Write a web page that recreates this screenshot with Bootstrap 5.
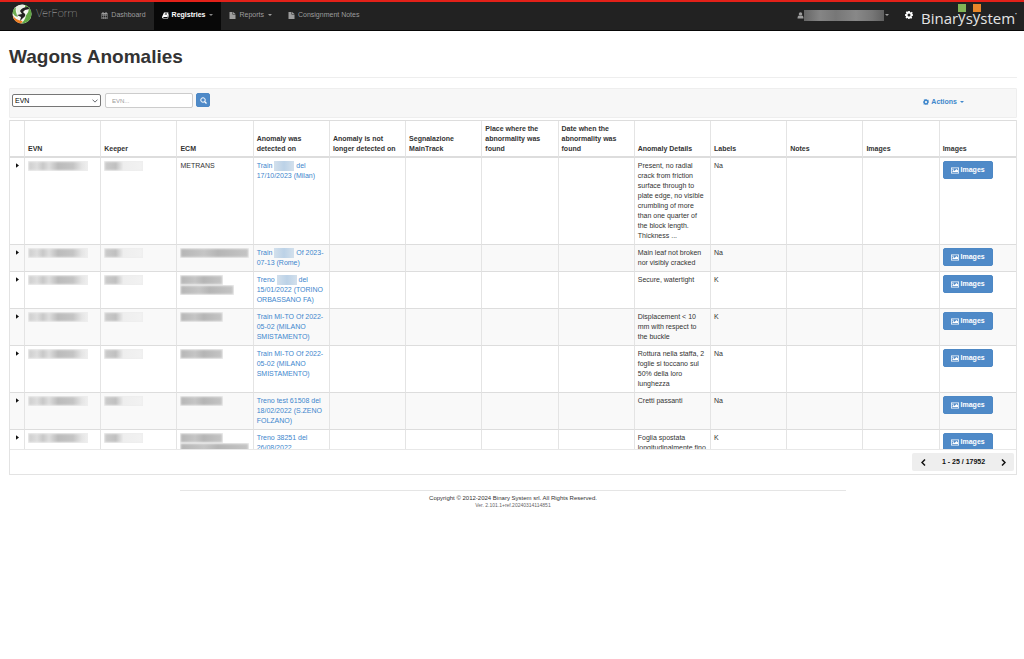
<!DOCTYPE html>
<html lang="en">
<head>
<meta charset="utf-8">
<meta name="viewport" content="width=device-width, initial-scale=1">
<title>Wagons Anomalies</title>
<link href="https://cdn.jsdelivr.net/npm/bootstrap@5.3.0/dist/css/bootstrap.min.css" rel="stylesheet">
<style>
body{font-family:"Liberation Sans",Arial,sans-serif;font-size:7px;line-height:10px;color:#333;background:#fff}
a{color:#337ab7;text-decoration:none}
svg{display:inline-block;fill:currentColor;flex:none}
.topbar{background:#222;border-top:2px solid #e32119;border-bottom:1px solid #080808;height:31px;padding:0 7px 0 12px;color:#9d9d9d}
.topbar .nav-link{color:#9d9d9d;padding:0 8px 2px;height:28px;font-size:7px;display:flex;align-items:center;gap:3px}
.topbar .nav-link.active{background:#080808;color:#fff;font-weight:bold}
.topbar .nav-link.active .caret{color:#888}
.topbar .navbar-brand{font:100 11px/24px Roboto,sans-serif;color:#bbb;gap:4px;margin:0 16px 0 0;padding:0}
.caret{border:2px solid transparent;border-top-color:currentColor;border-bottom:0;margin-left:1px;display:inline-block;vertical-align:middle}
.user-mask{width:80px;height:11px;background:linear-gradient(90deg,#666,#858585 20%,#777 40%,#888 65%,#777 85%,#606060)}
.company{font:400 15px/20px "Open Sans","Noto Sans",sans-serif;color:#e4e4e4;white-space:nowrap;padding-top:6px}
.company .tall{position:relative;top:-2px}
.company .tall::before{content:"";position:absolute;left:0;top:-2px;width:8px;height:8px;background:#82b456}
.company .orange::before{background:#e8862a}
.company sup{font-size:5px;top:-8px}
.page{padding:0 7px 0 9px}
h1{font-size:19px;line-height:24px;font-weight:bold;margin:0;padding:14px 0 8px;border-bottom:1px solid #eee}
.filters{background:#f7f7f7;border:1px solid #eee;height:30px;margin-top:10px;padding:4px 52px 0 2px;border-radius:1px}
.filters .form-select{width:89px;height:13px;font-size:7px;line-height:9px;padding:0 8px 1px 2px;border:1px solid #767676;border-radius:2px;color:#000;margin-top:1px;background-size:6px 6px;background-position:right 2px center}
.filters .form-control{width:88px;height:15px;font-size:6px;line-height:10px;padding:1px 6px;border:1px solid #ccc;border-radius:2px}
.filters .form-control::placeholder{color:#999}
.btn-blue{background:#4f8ac8;border:1px solid #4d88c5;color:#fff;border-radius:2px;display:inline-flex;align-items:center;justify-content:center;font-size:7px;line-height:10px;font-weight:bold;padding:0}
.btn-blue:hover{background:#3071a9;color:#fff}
.btn-find{width:14px;height:14px;margin-left:3px}
.btn-images{width:50px;height:18px;gap:2px}
.actions{color:#4088cc;font-weight:bold;display:flex;align-items:center;gap:2px;padding:0;font-size:7px;line-height:10px;margin-top:4px}
.gridbox{border:1px solid #e3e3e3;border-top:0;margin-top:2px}
.gridscroll{height:330px;overflow:hidden;border-bottom:1px solid #e8e8e8}
.gridtable{table-layout:fixed;margin:0;border-collapse:separate;border-spacing:0;color:#333;border-top:1px solid #ddd}
.gridtable>:not(caption)>*>*{padding:3px;border:0 solid #ddd;border-width:0 1px 1px 0;border-right-color:#e4e4e4;vertical-align:top;background:transparent;box-shadow:none}
.gridtable td:last-child,.gridtable th:last-child{border-right:0!important}
.gridtable thead th{vertical-align:bottom;border-bottom-width:2px!important;padding-bottom:2px!important}
.gridtable tbody tr:nth-child(even){background:#f9f9f9}
.gridtable tbody a{color:#4086cd}
.gridtable .expander{width:15px}
.gridtable .expander-cell{padding-left:5px!important;padding-right:0!important}
.gridtable button{vertical-align:top}
.fold{border:0;background:none;padding:0 0 0 1px;height:9px;line-height:0;display:block;color:#111}
.masked{display:block;height:10px;width:60px;background:linear-gradient(90deg,#ccc 0,#ddd 15%,#c8c8c8 25%,#ddd 35%,#bbb 50%,#c4c4c4 75%,#e5e5e5 90%,#eee);box-shadow:inset 0 0 2px 1px #eee}
.masked.keeper{width:39px;background:linear-gradient(90deg,#ccc,#c0c0c0 30%,#eee 50%,#f2f2f2)}
.masked.ecm{width:43px;background:linear-gradient(90deg,#b5b5b5,#c5c5c5 35%,#b5b5b5 55%,#c5c5c5)}
.masked.wide{width:69px}
.masked.mid{width:54px}
.masked.train{display:inline-block;width:20px;vertical-align:top;background:linear-gradient(90deg,#d3e0ec,#bcd2e7,#d3e0ec);box-shadow:none}
.pager{background:#eee;border-radius:2px;width:102px;height:18px;padding:0 8px 0 9px;color:#111;font-weight:bold}
.pager button{border:0;background:none;padding:0;line-height:0;color:#111}
.pagerbar{height:24px;padding:3px 2px 0 0}
footer{width:66%;margin:15px auto 0;border-top:1px solid #e5e5e5;text-align:center;font-size:6px;line-height:7px;padding-top:4px}
footer small{font-size:5px;color:#666;display:block}
</style>
</head>
<body>
<svg width="0" height="0" class="position-absolute" aria-hidden="true">
<symbol id="i-cal" viewBox="0 0 14 14"><path d="M1 2h2V0h2v2h4V0h2v2h2v12H1zM2 5v2h2V5zm3 0v2h4V5zm5 0v2h2V5zM2 8v2h2V8zm3 0v2h4V8zm5 0v2h2V8zm-8 3v2h2v-2zm3 0v2h4v-2zm5 0v2h2v-2z" fill-rule="evenodd"/></symbol>
<symbol id="i-book" viewBox="0 0 14 14"><path d="M4 1h9l-2 9H3q-1 1 0 2h8l2-8q1 0 1 1l-2 8H2q-2-1-2-3zM6 3l-.3 1h4.500L10.500 3zM5.500 5l-.3 1h4.500L10 5z" fill-rule="evenodd"/></symbol>
<symbol id="i-file" viewBox="0 0 14 14"><path d="M1 0h6v5h6v9H1zM8 0l5 4H8z"/></symbol>
<symbol id="i-user" viewBox="0 0 14 14"><circle cx="7" cy="4" r="3.500"/><path d="M1 13q0-6 3.500-6Q7 9 9.500 7 13 7 13 13z"/></symbol>
<symbol id="i-gear" viewBox="0 0 16 16"><path d="M6.500 0h3l.5 2.200 1.500.6 2-1.200 1 1 .9.900-1.200 2 .6 1.200L16 6.500v3l-2.200.5-.6 1.500 1.200 2-2 2-2-1.200-.9.400-.5 2.300H6.500L6 14.300l-1.200-.5-2 1.200-1.800-2 1.200-2-.5-1.200L0 9.500v-3L2.200 6l.6-1.500-1.200-2 2-2 2 1.200.5-.2zM8 5a3 3 0 1 0 0 6 3 3 0 0 0 0-6z" fill-rule="evenodd"/></symbol>
<symbol id="i-find" viewBox="0 0 14 14"><circle cx="6" cy="6" r="4.500" fill="none" stroke="currentColor" stroke-width="2"/><path d="M9 9l4 4" stroke="currentColor" stroke-width="2.500"/></symbol>
<symbol id="i-pic" viewBox="0 0 16 14"><path d="M0 1h16v12H0zM1.500 2.500v9h13v-9zM3 10V8l2-2 2 2 4-4 3 3v3z" fill-rule="evenodd"/><circle cx="4" cy="4.500" r="1.300"/></symbol>
<symbol id="i-tri" viewBox="0 0 4 6"><path d="M0 0l4 3-4 3z"/></symbol>
</svg>

<nav class="topbar navbar navbar-expand align-items-start">
  <a class="navbar-brand d-flex align-items-center" href="#">
    <svg width="20" height="20" viewBox="0 0 20 20" aria-hidden="true"><circle cx="10" cy="10" r="9.500" fill="#f6f6f2"/><path d="M13 1a9.500 9.500 0 0 1 1 17.600q-2 1-5 .9 4-3 5-8 3-4 3-7l-4-1z" fill="#61a744"/><path d="M4 3Q9 0 13 1l-3 3-2 3 2 3-2 1Q4 8 4 3z" fill="#e6efdf"/><path d="M4 3Q1 5 .6 9L3 12l3 1Q3 8 4 3z" fill="#6fae52"/><path d="M.7 11q2 5 10 6l-1.500 2.400Q2 19 .7 11z" fill="#ee7d22"/><path d="M8 7q2-4 8-4l1.500 2L13 6l-2 2 2 2q1 2-2 4l-3 3 1-4-4-2 5-1z" fill="#222"/></svg>VerForm</a>
  <ul class="navbar-nav me-auto">
    <li class="nav-item"><a class="nav-link" href="#"><svg width="7" height="7"><use href="#i-cal"/></svg>Dashboard</a></li>
    <li class="nav-item"><a class="nav-link active" href="#"><svg width="7" height="7"><use href="#i-book"/></svg>Registries<span class="caret"></span></a></li>
    <li class="nav-item"><a class="nav-link" href="#"><svg width="7" height="7"><use href="#i-file"/></svg>Reports<span class="caret"></span></a></li>
    <li class="nav-item"><a class="nav-link" href="#"><svg width="7" height="7"><use href="#i-file"/></svg>Consignment Notes</a></li>
  </ul>
  <a class="nav-link gap-0" href="#" aria-label="User"><svg width="7" height="7"><use href="#i-user"/></svg><span class="user-mask"></span><span class="caret"></span></a>
  <a class="nav-link text-white" href="#" aria-label="Settings"><svg width="8" height="8"><use href="#i-gear"/></svg></a>
  <div class="company">Binar<span class="tall">y</span>s<span class="tall orange">y</span>stem<sup>•</sup></div>
</nav>

<main class="page">
  <h1>Wagons Anomalies</h1>
  <form class="filters d-flex align-items-start">
    <select class="form-select" aria-label="Search field"><option>EVN</option></select>
    <input class="form-control ms-1" type="text" placeholder="EVN..." aria-label="EVN">
    <button class="btn-blue btn-find" type="button" aria-label="Search"><svg width="7" height="7"><use href="#i-find"/></svg></button>
    <button class="actions btn border-0 ms-auto" type="button"><svg width="6" height="6"><use href="#i-gear"/></svg>Actions<span class="caret"></span></button>
  </form>

  <div class="gridbox">
    <div class="gridscroll">
      <table class="table gridtable">
        <thead><tr><th class="expander"></th><th>EVN</th><th>Keeper</th><th>ECM</th><th>Anomaly was detected on</th><th>Anomaly is not longer detected on</th><th>Segnalazione MainTrack</th><th>Place where the abnormality was found</th><th>Date when the abnormality was found</th><th>Anomaly Details</th><th>Labels</th><th>Notes</th><th>Images</th><th>Images</th></tr></thead>
        <tbody>
          <tr><td class="expander-cell"><button class="fold" aria-label="Expand"><svg width="3" height="5"><use href="#i-tri"/></svg></button></td><td><span class="masked"></span></td><td><span class="masked keeper"></span></td><td>METRANS</td><td><a href="#">Train <span class="masked train"></span> del<br>17/10/2023 (Milan)</a></td><td></td><td></td><td></td><td></td><td>Present, no radial crack from friction surface through to plate edge, no visible crumbling of more than one quarter of the block length. Thickness ...</td><td>Na</td><td></td><td></td><td><button class="btn-blue btn-images"><svg width="8" height="7"><use href="#i-pic"/></svg>Images</button></td></tr>
          <tr><td class="expander-cell"><button class="fold" aria-label="Expand"><svg width="3" height="5"><use href="#i-tri"/></svg></button></td><td><span class="masked"></span></td><td><span class="masked keeper"></span></td><td><span class="masked ecm wide"></span></td><td><a href="#">Train <span class="masked train"></span> Of 2023-<br>07-13 (Rome)</a></td><td></td><td></td><td></td><td></td><td>Main leaf not broken nor visibly cracked</td><td>Na</td><td></td><td></td><td><button class="btn-blue btn-images"><svg width="8" height="7"><use href="#i-pic"/></svg>Images</button></td></tr>
          <tr><td class="expander-cell"><button class="fold" aria-label="Expand"><svg width="3" height="5"><use href="#i-tri"/></svg></button></td><td><span class="masked"></span></td><td><span class="masked keeper"></span></td><td><span class="masked ecm"></span><span class="masked ecm mid"></span></td><td><a href="#">Treno <span class="masked train"></span> del<br>15/01/2022 (TORINO ORBASSANO FA)</a></td><td></td><td></td><td></td><td></td><td>Secure, watertight</td><td>K</td><td></td><td></td><td><button class="btn-blue btn-images"><svg width="8" height="7"><use href="#i-pic"/></svg>Images</button></td></tr>
          <tr><td class="expander-cell"><button class="fold" aria-label="Expand"><svg width="3" height="5"><use href="#i-tri"/></svg></button></td><td><span class="masked"></span></td><td><span class="masked keeper"></span></td><td><span class="masked ecm"></span></td><td><a href="#">Train MI-TO Of 2022-05-02 (MILANO SMISTAMENTO)</a></td><td></td><td></td><td></td><td></td><td>Displacement &lt; 10 mm with respect to the buckle</td><td>K</td><td></td><td></td><td><button class="btn-blue btn-images"><svg width="8" height="7"><use href="#i-pic"/></svg>Images</button></td></tr>
          <tr><td class="expander-cell"><button class="fold" aria-label="Expand"><svg width="3" height="5"><use href="#i-tri"/></svg></button></td><td><span class="masked"></span></td><td><span class="masked keeper"></span></td><td><span class="masked ecm"></span></td><td><a href="#">Train MI-TO Of 2022-05-02 (MILANO SMISTAMENTO)</a></td><td></td><td></td><td></td><td></td><td>Rottura nella staffa, 2 foglie si toccano sul 50% della loro lunghezza</td><td>Na</td><td></td><td></td><td><button class="btn-blue btn-images"><svg width="8" height="7"><use href="#i-pic"/></svg>Images</button></td></tr>
          <tr><td class="expander-cell"><button class="fold" aria-label="Expand"><svg width="3" height="5"><use href="#i-tri"/></svg></button></td><td><span class="masked"></span></td><td><span class="masked keeper"></span></td><td><span class="masked ecm"></span></td><td><a href="#">Treno test 61508 del 18/02/2022 (S.ZENO FOLZANO)</a></td><td></td><td></td><td></td><td></td><td>Cretti passanti</td><td>Na</td><td></td><td></td><td><button class="btn-blue btn-images"><svg width="8" height="7"><use href="#i-pic"/></svg>Images</button></td></tr>
          <tr><td class="expander-cell"><button class="fold" aria-label="Expand"><svg width="3" height="5"><use href="#i-tri"/></svg></button></td><td><span class="masked"></span></td><td><span class="masked keeper"></span></td><td><span class="masked ecm"></span><span class="masked ecm wide"></span></td><td><a href="#">Treno 38251 del 26/08/2022</a></td><td></td><td></td><td></td><td></td><td>Foglia spostata longitudinalmente fino</td><td>K</td><td></td><td></td><td><button class="btn-blue btn-images"><svg width="8" height="7"><use href="#i-pic"/></svg>Images</button></td></tr>
        </tbody>
      </table>
    </div>
    <div class="pagerbar d-flex justify-content-end">
      <div class="pager d-flex align-items-center justify-content-between">
        <button aria-label="Previous"><svg width="5" height="7" viewBox="0 0 5 7"><path d="M4 .5l-3 3 3 3" fill="none" stroke="currentColor" stroke-width="1.500"/></svg></button>
        <span>1 - 25 / 17952</span>
        <button aria-label="Next"><svg width="5" height="7" viewBox="0 0 5 7"><path d="M1 .5l3 3-3 3" fill="none" stroke="currentColor" stroke-width="1.500"/></svg></button>
      </div>
    </div>
  </div>

  <footer>Copyright © 2012-2024 Binary System srl. All Rights Reserved.<small>Ver. 2.101.1+ref.20240314114851</small></footer>
</main>
<script src="https://cdn.jsdelivr.net/npm/bootstrap@5.3.0/dist/js/bootstrap.bundle.min.js"></script>
</body>
</html>
